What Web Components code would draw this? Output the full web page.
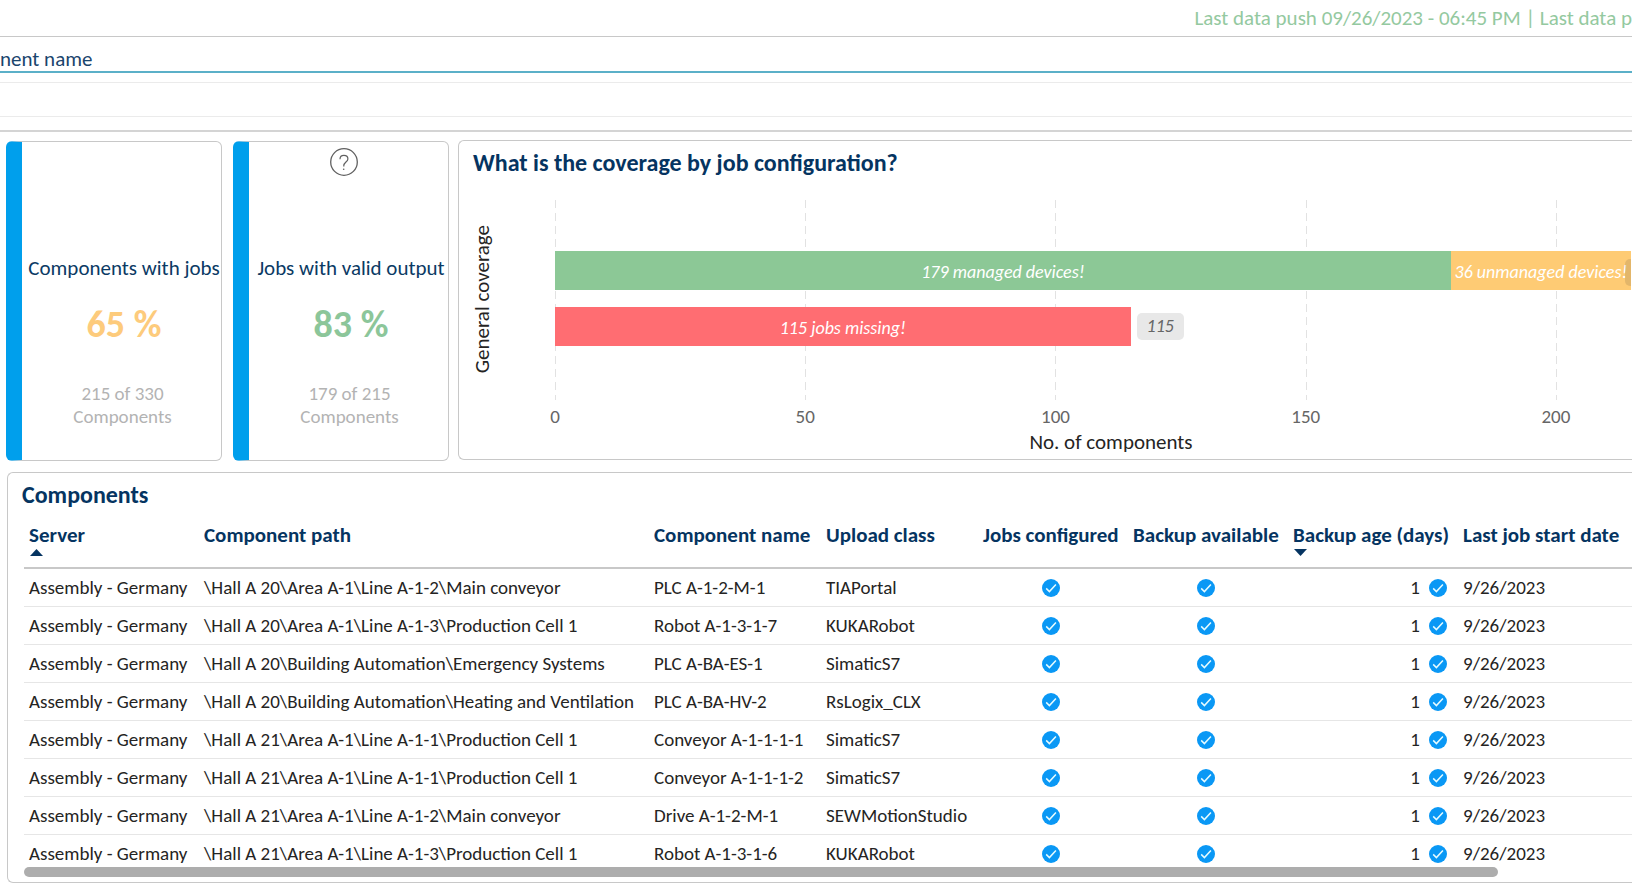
<!DOCTYPE html>
<html lang="en">
<head>
<meta charset="utf-8">
<title>Backup coverage report</title>
<style>
  html, body { margin: 0; height: 100%; }
  body { font-family: Calibri, Carlito, Lato, sans-serif; color: #252423; background: #fff; overflow-x: hidden; }
</style>
</head>
<body>
<report-page></report-page>

<script>
const define = (name, html, setup) => {
  const tpl = document.createElement('template');
  tpl.innerHTML = html;
  customElements.define(name, class extends HTMLElement {
    connectedCallback() {
      if (this.shadowRoot) return;
      this.attachShadow({ mode: 'open' }).append(tpl.content.cloneNode(true));
      if (setup) setup(this, this.shadowRoot);
    }
  });
};

define('check-icon', `
  <style>
    :host { display: inline-block; width: 18px; height: 18px; }
    svg { display: block; width: 100%; height: 100%; }
  </style>
  <svg viewBox="0 0 18 18" role="img" aria-label="Yes">
    <circle cx="9" cy="9" r="9" fill="#0a98f5"/>
    <path d="M4.2 9.4 L7.4 12.6 L13.9 5.6" fill="none" stroke="#e6fbff" stroke-width="1.5"/>
  </svg>`);

define('kpi-card', `
  <style>
    :host { display: flex; box-sizing: border-box; height: 320px; margin-top: 1px;
      border: 1px solid #c8c8c8; border-left: 16px solid #009fec; border-radius: 6px; text-align: center; }
    .body { flex: 1; min-width: 0; display: grid; grid-template-rows: 110px 32px 80px 1fr; }
    .help { margin: 6px 10px 0 0; justify-self: center; align-self: start; width: 28px; height: 28px; padding: 0; border: 0; background: none; }
    .help svg { display: block; }
    .title { color: #0b3a64; font-size: 21px; line-height: 32px; white-space: nowrap; padding-left: 5px; }
    .value { color: var(--tone); font-size: 38px; line-height: 80px; font-weight: 700; padding-left: 5px; }
    .note { color: #b3b3b3; font-size: 19px; line-height: 23px; padding: 18px 0 0 2px; }
  </style>
  <div class="body">
    <div class="top"></div>
    <div class="title"><slot name="title"></slot></div>
    <div class="value"><slot name="value"></slot></div>
    <div class="note"><slot></slot></div>
  </div>`, (host, root) => {
    if (host.hasAttribute('help')) {
      const b = document.createElement('button');
      b.className = 'help';
      b.type = 'button';
      b.setAttribute('aria-label', 'Help');
      b.innerHTML = `<svg width="28" height="28" viewBox="0 0 28 28" fill="none" stroke="#606060">
        <circle cx="14" cy="14" r="13.3" stroke-width="1.3"/>
        <path d="M10 11.2 C10 8.8 11.6 7.4 13.9 7.4 C16.3 7.4 17.9 8.9 17.9 11 C17.9 13.8 13.8 14.4 13.8 17.6 V18.4" stroke-width="1.2"/>
        <circle cx="13.7" cy="21.2" r="0.8" fill="#606060" stroke="none"/></svg>`;
      root.querySelector('.top').replaceWith(b);
    }
  });

define('report-panel', `
  <style>
    :host { display: block; box-sizing: border-box; border: 1px solid #c8c8c8; border-right: 0; border-radius: 6px 0 0 6px; min-width: 0; overflow: hidden; }
    h2 { margin: 0; padding: 8px 0 0 14px; font-size: 24px; line-height: 28px; font-weight: 700; color: #053461; white-space: nowrap; }
  </style>
  <h2><slot name="heading"></slot></h2>
  <slot></slot>`);

define('coverage-chart', `
  <style>
    :host { display: grid; grid-template-columns: 50px 1fr; padding: 0 1px 0 46px; }
    .ylabel { display: flex; align-items: center; height: 200px; margin: 22px 0 0 -35px; }
    .ylabel span { writing-mode: vertical-rl; transform: rotate(180deg); font-size: 21px; line-height: 24px; white-space: nowrap; }
    .plot { display: grid; margin-top: 23px; height: 200px; }
    .grid, .bars { grid-area: 1 / 1; min-width: 0; }
    .grid, .ticks { display: grid; grid-template-columns: 50fr 50fr 50fr 50fr 15fr; }
    .grid i { background: repeating-linear-gradient(#e2e2e2 0 8px, transparent 8px 13px) no-repeat 0 0 / 1px 100%; }
    .bars { display: flex; flex-direction: column; justify-content: center; gap: 17px; padding-bottom: 4px; }
    .row { display: grid; height: 39px; align-items: stretch; }
    .one { grid-template-columns: 179fr 36fr; }
    .two { grid-template-columns: 115fr 100fr; }
    .bar { display: flex; align-items: center; justify-content: center; min-width: 0; color: #fff; font-size: 18px; font-style: italic; white-space: nowrap; padding-top: 4px; }
    .green { background: #8cc896; } .amber { background: #fecb74; position: relative; } .red { background: #ff6d72; }
    .amber::after { content: ""; position: absolute; right: 0; top: 8px; width: 6px; height: 27px; border-radius: 5px 0 0 5px; background: rgb(120 100 70 / .2); }
    .tag { align-self: center; justify-self: start; margin-left: 6px; padding: 0 10px; border-radius: 5px; background: #e8e8e8; color: #666; font-size: 18px; font-style: italic; line-height: 27px; }
    .ticks { grid-column: 2; margin-top: 5px; font-size: 19px; line-height: 24px; color: #666; }
    .ticks span { display: flex; justify-content: center; width: 0; }
    .xlabel { grid-column: 2; margin: 1px 0 0; padding-left: 36px; text-align: center; font-size: 21px; line-height: 24px; }
  </style>
  <div class="ylabel"><span>General coverage</span></div>
  <div class="plot">
    <div class="grid"><i></i><i></i><i></i><i></i><i></i></div>
    <div class="bars">
      <div class="row one"><div class="bar green">179 managed devices!</div><div class="bar amber">36 unmanaged devices!</div></div>
      <div class="row two"><div class="bar red">115 jobs missing!</div><span class="tag">115</span></div>
    </div>
  </div>
  <div class="ticks"><span>0</span><span>50</span><span>100</span><span>150</span><span>200</span></div>
  <p class="xlabel">No. of components</p>`);

const rows = [
  ['\\Hall A 20\\Area A-1\\Line A-1-2\\Main conveyor', 'PLC A-1-2-M-1', 'TIAPortal'],
  ['\\Hall A 20\\Area A-1\\Line A-1-3\\Production Cell 1', 'Robot A-1-3-1-7', 'KUKARobot'],
  ['\\Hall A 20\\Building Automation\\Emergency Systems', 'PLC A-BA-ES-1', 'SimaticS7'],
  ['\\Hall A 20\\Building Automation\\Heating and Ventilation', 'PLC A-BA-HV-2', 'RsLogix_CLX'],
  ['\\Hall A 21\\Area A-1\\Line A-1-1\\Production Cell 1', 'Conveyor A-1-1-1-1', 'SimaticS7'],
  ['\\Hall A 21\\Area A-1\\Line A-1-1\\Production Cell 1', 'Conveyor A-1-1-1-2', 'SimaticS7'],
  ['\\Hall A 21\\Area A-1\\Line A-1-2\\Main conveyor', 'Drive A-1-2-M-1', 'SEWMotionStudio'],
  ['\\Hall A 21\\Area A-1\\Line A-1-3\\Production Cell 1', 'Robot A-1-3-1-6', 'KUKARobot']
];

define('component-table', `
  <style>
    :host { display: block; position: relative; margin: 10px 0 5px 16px; padding-bottom: 4px; }
    table { border-collapse: separate; border-spacing: 0; table-layout: fixed; width: 100%; }
    th { height: 48px; padding: 0 5px; vertical-align: top; text-align: left; border-bottom: 2px solid #c8c8c8; }
    button { all: unset; display: block; font-size: 21px; line-height: 28px; font-weight: 700; color: #053461; white-space: nowrap; cursor: pointer; padding-top: 2px; }
    th svg { display: block; margin: 0 0 0 1px; }
    td { box-sizing: border-box; height: 38px; padding: 0 5px; border-bottom: 1px solid #e6e6e6; font-size: 19px; line-height: 24px; white-space: nowrap; }
    tr:last-child td { border-bottom: 0; }
    .mark { display: flex; justify-content: center; padding-right: 4px; }
    .age { display: flex; justify-content: flex-end; align-items: center; gap: 9px; padding-right: 6px; }
    .thumb { position: absolute; left: 0; bottom: 0; width: calc(100% - 134px); height: 10px; border-radius: 5px; background: #adadad; }
  </style>
  <table>
    <colgroup><col style="width:175px"><col style="width:450px"><col style="width:172px"><col style="width:157px"><col style="width:150px"><col style="width:160px"><col style="width:170px"><col></colgroup>
    <thead><tr></tr></thead><tbody></tbody>
  </table>
  <div class="thumb"></div>`, (host, root) => {
    const up = '<svg width="13" height="7" viewBox="0 0 13 7"><path d="M0 7 L6.5 0 L13 7Z" fill="#053461"/></svg>';
    const down = '<svg width="13" height="7" viewBox="0 0 13 7"><path d="M0 0 L6.5 7 L13 0Z" fill="#053461"/></svg>';
    root.querySelector('thead tr').innerHTML = [
      ['Server', up], ['Component path', ''], ['Component name', ''], ['Upload class', ''], ['Jobs configured', ''],
      ['Backup available', ''], ['Backup age (days)', down], ['Last job start date', '']
    ].map(([t, icon]) => `<th scope="col"><button type="button">${t}</button>${icon}</th>`).join('');
    const check = '<check-icon></check-icon>';
    root.querySelector('tbody').innerHTML = rows.map(([path, name, cls]) => `
      <tr><td>Assembly - Germany</td><td>${path}</td><td>${name}</td><td>${cls}</td>
      <td><div class="mark">${check}</div></td><td><div class="mark">${check}</div></td><td><div class="age">1 ${check}</div></td><td>9/26/2023</td></tr>`).join('');
  });

define('report-page', `
  <style>
    :host { display: block; overflow: hidden; }
    .status { height: 36px; border-bottom: 1px solid #c8c8c8; display: flex; justify-content: flex-end; color: #94c9a0; font-size: 21px; line-height: 36px; white-space: nowrap; }
    .search { height: 34px; border-bottom: 2px solid #5bb0c8; color: #1a456d; font-size: 21px; line-height: 44px; }
    .band { margin-top: 9px; height: 33px; border: solid #ebebeb; border-width: 1px 0; }
    .rule { height: 13px; border-bottom: 2px solid #d4d4d4; }
    .top { display: grid; grid-template-columns: 216px 216px 1fr; margin: 8px 0 0 6px; column-gap: 11px; }
    .top report-panel { margin-left: -2px; height: 320px; }
    .table { margin: 11px 0 0 7px; }
  </style>
  <header class="status"><span>Last data push 09/26/2023 - 06:45 PM | Last data p</span></header>
  <div class="search">nent name</div>
  <div class="band"></div>
  <div class="rule"></div>
  <main>
    <section class="top">
      <kpi-card style="--tone:#fdcb7c"><span slot="title">Components with jobs</span><span slot="value">65 %</span>215 of 330<br>Components</kpi-card>
      <kpi-card help style="--tone:#8cc69a"><span slot="title">Jobs with valid output</span><span slot="value">83 %</span>179 of 215<br>Components</kpi-card>
      <report-panel><span slot="heading">What is the coverage by job configuration?</span><coverage-chart></coverage-chart></report-panel>
    </section>
    <report-panel class="table"><span slot="heading">Components</span><component-table></component-table></report-panel>
  </main>`);
</script>
</body>
</html>
